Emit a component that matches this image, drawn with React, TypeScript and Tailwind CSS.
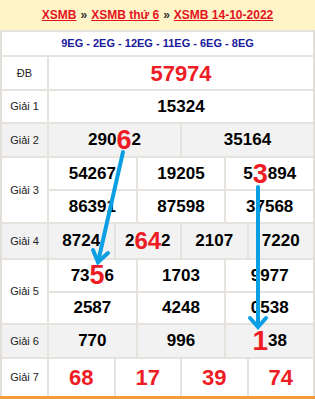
import React from 'react'

const red = 'text-[#ee1c25]'

function Big({ children, size = 'text-[27px]' }: { children: React.ReactNode; size?: string }) {
  return <span className={`${size} ${red} leading-[0] align-baseline`}>{children}</span>
}

function Cell({
  children,
  big,
}: {
  children: React.ReactNode
  big?: boolean
}) {
  return (
    <div
      className={`flex-1 flex items-center justify-center border-l-2 border-[#e6e3df] font-bold ${
        big ? `text-[22px] ${red}` : 'text-[17px] text-black'
      }`}
    >
      {children}
    </div>
  )
}

function Row({
  label,
  h,
  gray,
  last,
  children,
}: {
  label: string
  h: string
  gray?: boolean
  last?: boolean
  children: React.ReactNode
}) {
  return (
    <div className={`flex ${h} ${gray ? 'bg-[#f2f2f2]' : 'bg-white'} ${last ? '' : 'border-b-2 border-[#e6e3df]'}`}>
      <div className="w-[45px] flex items-center justify-center text-[11px] text-[#222]">{label}</div>
      <div className="flex-1 flex flex-col">{children}</div>
    </div>
  )
}

function Sub({ children, first }: { children: React.ReactNode; first?: boolean }) {
  return <div className={`flex flex-1 ${first ? 'border-b-2 border-[#e6e3df]' : ''}`}>{children}</div>
}

export default function App() {
  return (
    <div className="relative w-[315px] h-[399px] bg-white font-['Liberation_Sans',Arial,sans-serif] overflow-hidden">
      <div className="h-[30px] bg-[#fef4c7] flex items-center justify-center gap-[4px] text-[12px] font-bold">
        <span className="text-[#e3141f] underline">XSMB</span>
        <span className="text-[#333]">»</span>
        <span className="text-[#e3141f] underline">XSMB thứ 6</span>
        <span className="text-[#333]">»</span>
        <span className="text-[#e3141f] underline">XSMB 14-10-2022</span>
      </div>
      <div className="border-x-2 border-[#e2dfdb]">
        <div className="h-[27px] border-y-2 border-[#e6e3df] flex items-center justify-center text-[11px] font-bold text-[#1a1a9c]">
          9EG - 2EG - 12EG - 11EG - 6EG - 8EG
        </div>
        <Row label="ĐB" h="h-[34px]">
          <Sub>
            <Cell big>57974</Cell>
          </Sub>
        </Row>
        <Row label="Giải 1" h="h-[33px]">
          <Sub>
            <Cell>15324</Cell>
          </Sub>
        </Row>
        <Row label="Giải 2" h="h-[34px]" gray>
          <Sub>
            <Cell>
              290<Big>6</Big>2
            </Cell>
            <Cell>35164</Cell>
          </Sub>
        </Row>
        <Row label="Giải 3" h="h-[66px]">
          <Sub first>
            <Cell>54267</Cell>
            <Cell>19205</Cell>
            <Cell>
              5<Big>3</Big>894
            </Cell>
          </Sub>
          <Sub>
            <Cell>86391</Cell>
            <Cell>87598</Cell>
            <Cell>37568</Cell>
          </Sub>
        </Row>
        <Row label="Giải 4" h="h-[36px]" gray>
          <Sub>
            <Cell>8724</Cell>
            <Cell>
              2<Big size="text-[24px]">64</Big>2
            </Cell>
            <Cell>2107</Cell>
            <Cell>7220</Cell>
          </Sub>
        </Row>
        <Row label="Giải 5" h="h-[65px]">
          <Sub first>
            <Cell>
              73<Big>5</Big>6
            </Cell>
            <Cell>1703</Cell>
            <Cell>9977</Cell>
          </Sub>
          <Sub>
            <Cell>2587</Cell>
            <Cell>4248</Cell>
            <Cell>0538</Cell>
          </Sub>
        </Row>
        <Row label="Giải 6" h="h-[34px]" gray>
          <Sub>
            <Cell>770</Cell>
            <Cell>996</Cell>
            <Cell>
              <Big size="text-[28px]">1</Big>38
            </Cell>
          </Sub>
        </Row>
        <Row label="Giải 7" h="h-[37px]" last>
          <Sub>
            <Cell big>68</Cell>
            <Cell big>17</Cell>
            <Cell big>39</Cell>
            <Cell big>74</Cell>
          </Sub>
        </Row>
      </div>
      <div className="h-[3px] bg-[#f39a3c]" />

      <svg className="absolute inset-0 pointer-events-none" width="315" height="399" viewBox="0 0 315 399">
        <g stroke="#0a9fe2" strokeWidth="4" strokeLinecap="round" fill="none">
          <line x1="123" y1="152" x2="98" y2="262" />
          <polyline points="93,250 98,262 108,253" />
          <line x1="258" y1="187" x2="258" y2="326" />
          <polyline points="250,318 258,327 266,318" />
        </g>
      </svg>
    </div>
  )
}
